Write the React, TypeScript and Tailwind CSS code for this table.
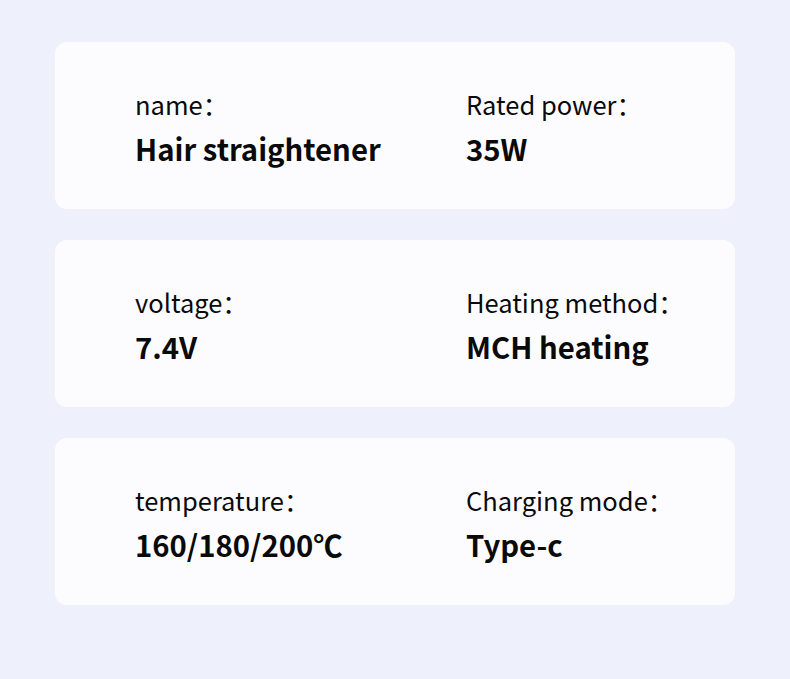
import React from "react";

const rows = [
  [
    ["name：", "Hair straightener"],
    ["Rated power：", "35W"],
  ],
  [
    ["voltage：", "7.4V"],
    ["Heating method：", "MCH heating"],
  ],
  [
    ["temperature：", "160/180/200℃"],
    ["Charging mode：", "Type-c"],
  ],
];

export default function App() {
  return (
    <div
      className="w-[790px] h-[679px] bg-[#eef0fc] px-[55px] pt-[42px] flex flex-col gap-[31px]"
      style={{ fontFamily: '"Noto Sans CJK SC", "Noto Sans", sans-serif' }}
    >
      {rows.map((row, i) => (
        <div
          key={i}
          className="h-[167px] rounded-[12px] bg-[#fcfcff] pl-[80px] pt-[44px] grid grid-cols-[331px_1fr] items-start"
        >
          {row.map(([label, value], j) => (
            <div key={j} className="flex flex-col text-[#0a0a0a]">
              <div className="text-[25.5px] leading-[36px]">{label}</div>
              <div className="text-[29.3px] leading-[44px] font-bold mt-[4px]">{value}</div>
            </div>
          ))}
        </div>
      ))}
    </div>
  );
}
